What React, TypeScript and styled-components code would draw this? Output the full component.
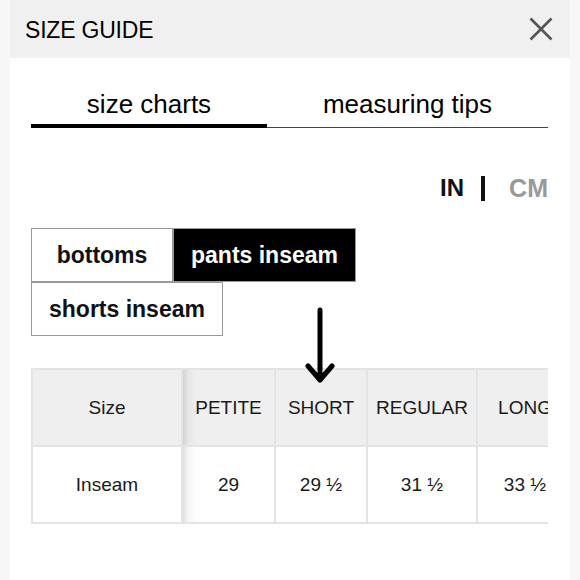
import React, { FC, useState } from 'react'
import styled, { createGlobalStyle } from 'styled-components'

const GlobalStyle = createGlobalStyle`
  html, body {
    margin: 0;
    padding: 0;
    background: #f7f7f7;
    font-family: "Liberation Sans", Arial, Helvetica, sans-serif;
    color: #111;
  }
`

const Panel = styled.div`
  margin: 0 10px;
  min-height: 580px;
  background: #fff;
`

const Header = styled.div`
  height: 58px;
  background: #f0f0f0;
  display: flex;
  align-items: center;
  justify-content: space-between;
  padding: 0 17px 0 15px;
`

const Title = styled.div`
  font-size: 23px;
  letter-spacing: -0.2px;
  color: #000;
  padding-top: 2px;
`

const CloseButton = styled.button`
  width: 24px;
  height: 24px;
  padding: 0;
  border: none;
  background: none;
  display: flex;
  cursor: pointer;
`

const Content = styled.div`
  padding: 0 22px 0 21px;
`

const Tabs = styled.div`
  display: flex;
  margin-top: 31px;
  box-shadow: inset 0 -1px 0 #444;
`

const Tab = styled.div<{ $active?: boolean; $width?: number }>`
  flex: ${(p) => (p.$width ? `0 0 ${p.$width}px` : '1')};
  text-align: center;
  font-size: 26px;
  line-height: 30px;
  color: #000;
  padding-bottom: 5px;
  border-bottom: 4px solid ${(p) => (p.$active ? '#000' : 'transparent')};
  cursor: pointer;
`

const Units = styled.div`
  display: flex;
  justify-content: flex-end;
  align-items: center;
  margin-top: 46px;
  height: 28px;
  font-size: 24px;
  font-weight: bold;
`

const Unit = styled.span<{ $active?: boolean }>`
  color: ${(p) => (p.$active ? '#111' : '#999')};
  font-size: ${(p) => (p.$active ? '24px' : '25px')};
  cursor: pointer;
`

const Divider = styled.span`
  width: 4px;
  height: 25px;
  background: #111;
  margin: 0 24px 0 17px;
`

const ButtonGroup = styled.div`
  display: flex;
  flex-wrap: wrap;
  max-width: 360px;
  margin-top: 26px;
`

const CategoryButton = styled.button<{ $active?: boolean }>`
  box-sizing: border-box;
  height: 54px;
  min-width: 142px;
  padding: 0 17px;
  border: 1px solid #9a9a9a;
  background: ${(p) => (p.$active ? '#000' : '#fff')};
  color: ${(p) => (p.$active ? '#fff' : '#111')};
  font-family: inherit;
  font-size: 23px;
  font-weight: bold;
  cursor: pointer;
`

const TableArea = styled.div`
  position: relative;
  margin-top: 32px;
`

const ArrowMark = styled.svg`
  position: absolute;
  left: 274px;
  top: -61px;
  z-index: 2;
`

const Scroller = styled.div`
  overflow-x: auto;
  scrollbar-width: none;
  &::-webkit-scrollbar {
    display: none;
  }
`

const Table = styled.table`
  border-collapse: collapse;
  border: 2px solid #e6e6e6;
  font-size: 19px;
  color: #1a1a1a;
`

const Cell = styled.td<{ $head?: boolean; $width: number; $shadow?: boolean }>`
  box-sizing: border-box;
  min-width: ${(p) => p.$width}px;
  width: ${(p) => p.$width}px;
  height: 77px;
  padding: 0;
  text-align: center;
  white-space: nowrap;
  border: 2px solid #e4e4e4;
  background: ${(p) =>
    p.$shadow
      ? `linear-gradient(to right, rgba(0,0,0,0.12), rgba(0,0,0,0.04) 5px, rgba(0,0,0,0) 14px), ${p.$head ? '#efefef' : '#fff'}`
      : p.$head
      ? '#efefef'
      : '#fff'};
`

const columns = [
  { size: 'Size', inseam: 'Inseam', width: 150 },
  { size: 'PETITE', inseam: '29', width: 93 },
  { size: 'SHORT', inseam: '29 ½', width: 92 },
  { size: 'REGULAR', inseam: '31 ½', width: 110 },
  { size: 'LONG', inseam: '33 ½', width: 96 },
]

const categories = ['bottoms', 'pants inseam', 'shorts inseam']

const App: FC = () => {
  const [tab, setTab] = useState(0)
  const [unit, setUnit] = useState('IN')
  const [category, setCategory] = useState('pants inseam')

  return (
    <>
      <GlobalStyle />
      <Panel>
        <Header>
          <Title>SIZE GUIDE</Title>
          <CloseButton aria-label="close">
            <svg width="24" height="24" viewBox="0 0 24 24">
              <path
                d="M1.5 1.5 L22.5 22.5 M22.5 1.5 L1.5 22.5"
                stroke="#555"
                strokeWidth="2.6"
                fill="none"
              />
            </svg>
          </CloseButton>
        </Header>
        <Content>
          <Tabs>
            <Tab $width={236} $active={tab === 0} onClick={() => setTab(0)}>
              size charts
            </Tab>
            <Tab $active={tab === 1} onClick={() => setTab(1)}>
              measuring tips
            </Tab>
          </Tabs>

          <Units>
            <Unit $active={unit === 'IN'} onClick={() => setUnit('IN')}>
              IN
            </Unit>
            <Divider />
            <Unit $active={unit === 'CM'} onClick={() => setUnit('CM')}>
              CM
            </Unit>
          </Units>

          <ButtonGroup>
            {categories.map((c) => (
              <CategoryButton
                key={c}
                $active={category === c}
                onClick={() => setCategory(c)}
              >
                {c}
              </CategoryButton>
            ))}
          </ButtonGroup>

          <TableArea>
            <ArrowMark width="30" height="78" viewBox="0 0 30 78">
              <path
                d="M15 3 L15 73 M3 59 L15 73 L27 59"
                stroke="#000"
                strokeWidth="5"
                strokeLinecap="round"
                strokeLinejoin="round"
                fill="none"
              />
            </ArrowMark>
            <Scroller>
              <Table>
                <tbody>
                  <tr>
                    {columns.map((c, i) => (
                      <Cell key={c.size} $head $width={c.width} $shadow={i === 1}>
                        {c.size}
                      </Cell>
                    ))}
                  </tr>
                  <tr>
                    {columns.map((c, i) => (
                      <Cell key={c.size} $width={c.width} $shadow={i === 1}>
                        {c.inseam}
                      </Cell>
                    ))}
                  </tr>
                </tbody>
              </Table>
            </Scroller>
          </TableArea>
        </Content>
      </Panel>
    </>
  )
}

export default App
